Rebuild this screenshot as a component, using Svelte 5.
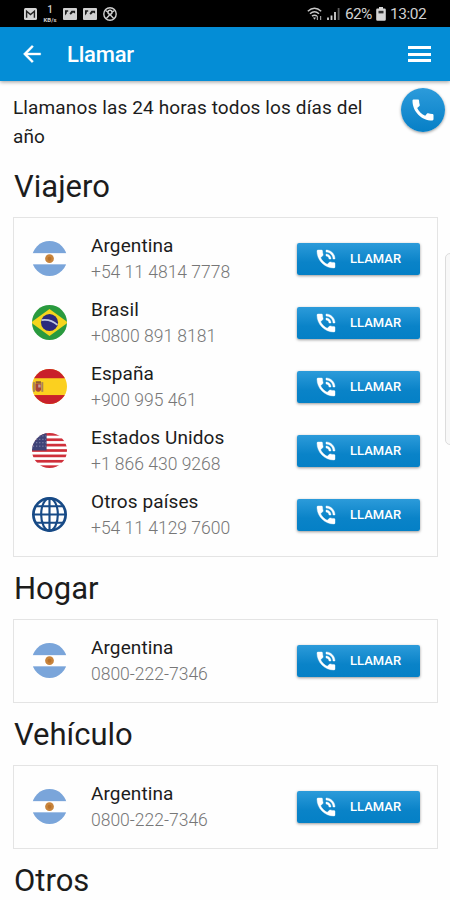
<script lang="ts">
	type Flag = 'ar' | 'br' | 'es' | 'us' | 'world';

	interface Contact {
		country: string;
		phone: string;
		flag: Flag;
	}

	interface Section {
		title: string;
		contacts: Contact[];
	}

	const sections: Section[] = [
		{
			title: 'Viajero',
			contacts: [
				{ country: 'Argentina', phone: '+54 11 4814 7778', flag: 'ar' },
				{ country: 'Brasil', phone: '+0800 891 8181', flag: 'br' },
				{ country: 'España', phone: '+900 995 461', flag: 'es' },
				{ country: 'Estados Unidos', phone: '+1 866 430 9268', flag: 'us' },
				{ country: 'Otros países', phone: '+54 11 4129 7600', flag: 'world' }
			]
		},
		{
			title: 'Hogar',
			contacts: [{ country: 'Argentina', phone: '0800-222-7346', flag: 'ar' }]
		},
		{
			title: 'Vehículo',
			contacts: [{ country: 'Argentina', phone: '0800-222-7346', flag: 'ar' }]
		},
		{ title: 'Otros', contacts: [] }
	];

	const stripes = [0, 2, 4, 6, 8, 10, 12];
</script>

{#snippet picture()}
	<svg width="14" height="12" viewBox="0 0 14 12">
		<rect width="14" height="12" rx="1" fill="#d0d0d0" />
		<path d="M2 7.500V2.200h3.200v1.600H3.800v1.400L2 7.500zM6.500 5.400l2-2.600h3.600v2.800L10 4.600 7.800 6.800z" fill="#1c1c1c" />
	</svg>
{/snippet}

{#snippet flagIcon(flag: Flag)}
	<svg class="flag" viewBox="0 0 36 36">
		<defs>
			<clipPath id="round"><circle cx="18" cy="18" r="18" /></clipPath>
		</defs>
		{#if flag === 'ar'}
			<g clip-path="url(#round)">
				<rect width="36" height="36" fill="#fff" />
				<rect width="36" height="12.5" fill="#7aa5da" />
				<rect y="24" width="36" height="12" fill="#7aa5da" />
				<circle cx="18" cy="18.2" r="4.5" fill="#c8843c" />
				<circle cx="18" cy="18.2" r="2" fill="#b9722b" />
			</g>
		{:else if flag === 'br'}
			<g clip-path="url(#round)">
				<rect width="36" height="36" fill="#299a3e" />
				<path d="M18 4l19 14-19 14L-1 18z" fill="#f5d51e" />
				<circle cx="18" cy="18" r="8.8" fill="#2c2a7c" />
				<path d="M9.8 15.5c6-1 12 1 16.3 5" fill="none" stroke="#c3c8e2" stroke-width="1.8" />
			</g>
		{:else if flag === 'es'}
			<g clip-path="url(#round)">
				<rect width="36" height="36" fill="#fbd01f" />
				<rect width="36" height="9.5" fill="#c9202b" />
				<rect y="26.8" width="36" height="9.2" fill="#c9202b" />
				<rect x="1" y="13.5" width="2" height="10" fill="#a98355" />
				<rect x="9.6" y="13.5" width="2" height="10" fill="#a98355" />
				<path d="M3.5 15h5.8v6.5q-2.9 4-5.8 0z" fill="#a8443a" />
				<path d="M3.8 12.6h5.4v2.2H3.8z" fill="#8c5a35" />
				<path d="M6.4 16h2.5v3H6.4z" fill="#c0a0a0" />
			</g>
		{:else if flag === 'us'}
			<g clip-path="url(#round)">
				<rect width="36" height="36" fill="#fff" />
				{#each stripes as i}
					<rect y={i * 2.77} width="36" height="2.77" fill="#cf2f3a" />
				{/each}
				<rect width="15" height="18" fill="#3f4377" />
				{#each [3, 6.5, 10, 13.5] as y}
					<path d="M1 {y}h13.5" stroke="#9094b5" stroke-width="1" stroke-dasharray="1.2 2" />
				{/each}
			</g>
		{:else}
			<g fill="none" stroke="#174a86" stroke-width="2.2">
				<circle cx="18" cy="18" r="16.6" stroke-width="2.8" />
				<ellipse cx="18" cy="18" rx="8.6" ry="16.6" />
				<path d="M18 1v34M1 18h34M4 9.500h28M4 26.500h28" />
			</g>
		{/if}
	</svg>
{/snippet}

<div class="screen">
	<div class="status-bar">
		<div class="notifications">
			<svg width="13" height="12" viewBox="0 0 13 12">
				<rect width="13" height="12" rx="1.5" fill="#d6d6d6" />
				<path d="M2.6 9.8V3.2l3.9 3.3 3.9-3.3v6.6" fill="none" stroke="#222" stroke-width="1.4" />
			</svg>
			<div class="speed">
				<span class="speed-value">1</span>
				<span class="speed-unit">KB/s</span>
			</div>
			{@render picture()}
			{@render picture()}
			<svg width="14" height="14" viewBox="0 0 14 14">
				<g fill="none" stroke="#d0d0d0" stroke-width="1.4">
					<circle cx="7" cy="7" r="6.2" />
					<circle cx="7" cy="5.3" r="2" />
					<path d="M3.3 11.5l3.7-4 3.7 4M2.5 3.5l2.5 1.6M11.5 3.5L9 5.1" />
				</g>
			</svg>
		</div>
		<div class="system">
			<svg width="16" height="14" viewBox="0 0 16 14">
				<g fill="none" stroke="#c8c8c8" stroke-width="1.5">
					<path d="M.8 4.2q6.7-6 13.400 0M3 6.800q4.500-4 9 0" />
					<path d="M5 9.200q2.500-2 5 0" />
				</g>
				<path d="M6 10.400h3l-1.500 2.400z" fill="#c8c8c8" />
				<path d="M10.400 9v4M13.600 9v4" stroke="#999" stroke-width="1.2" />
			</svg>
			<svg class="signal" width="13" height="13" viewBox="0 0 13 13">
				<path d="M1 13v-2.500M4.500 13V8.500M8 13V5" stroke="#d0d0d0" stroke-width="1.8" />
				<path d="M11.600 13V1" stroke="#5c5c5c" stroke-width="1.8" />
			</svg>
			<span class="percent">62%</span>
			<svg class="battery" width="10" height="14" viewBox="0 0 10 14">
				<path d="M3 0h4v1.500h1.600q1.200 0 1.200 1.200v9.800q0 1.300-1.200 1.300H1.400Q.2 13.800.2 12.500V2.700Q.2 1.500 1.400 1.500H3z" fill="#d6d6d6" />
				<path d="M2.500 3.800h5v2.600h-5z" fill="#333" />
			</svg>
			<span class="time">13:02</span>
		</div>
	</div>

	<header class="app-bar">
		<button class="icon-btn" aria-label="Volver">
			<svg width="26" height="26" viewBox="0 0 24 24">
				<path d="M20 11H7.830l5.590-5.590L12 4l-8 8 8 8 1.410-1.410L7.830 13H20v-2z" fill="#fff" stroke="#fff" stroke-width=".3" />
			</svg>
		</button>
		<h1>Llamar</h1>
		<button class="icon-btn menu" aria-label="Menú">
			<span></span>
			<span></span>
			<span></span>
		</button>
	</header>

	<main>
		<div class="intro">
			<p>Llamanos las 24 horas todos los días del año</p>
			<button class="fab" aria-label="Llamar">
				<svg width="28" height="28" viewBox="0 0 24 24">
					<path d="M20.010 15.380c-1.230 0-2.420-.2-3.530-.560-.350-.120-.740-.030-1.010.240l-1.570 1.970c-2.830-1.350-5.480-3.900-6.890-6.830l1.950-1.660c.270-.280.350-.670.240-1.020-.370-1.110-.560-2.300-.560-3.530 0-.540-.450-.990-.990-.990H4.190C3.650 3 3 3.240 3 3.990 3 13.280 10.730 21 20.010 21c.710 0 .990-.630.990-1.180v-3.450c0-.540-.450-.990-.990-.990z" fill="#fff" />
				</svg>
			</button>
		</div>

		{#each sections as section (section.title)}
			<h2>{section.title}</h2>
			{#if section.contacts.length}
				<div class="card">
					{#each section.contacts as contact (contact.phone)}
						<div class="contact">
							{@render flagIcon(contact.flag)}
							<div class="info">
								<span class="country">{contact.country}</span>
								<span class="phone">{contact.phone}</span>
							</div>
							<button class="call-btn">
								<svg width="24" height="24" viewBox="0 0 24 24">
									<path d="M20 15.500c-1.250 0-2.450-.2-3.570-.570-.350-.110-.740-.030-1.020.240l-2.200 2.200c-2.830-1.440-5.150-3.750-6.590-6.590l2.200-2.210c.280-.260.360-.650.250-1C8.700 6.450 8.500 5.250 8.500 4c0-.550-.450-1-1-1H4c-.550 0-1 .450-1 1 0 9.390 7.610 17 17 17 .550 0 1-.450 1-1v-3.500c0-.550-.450-1-1-1zM19 12h2c0-4.970-4.030-9-9-9v2c3.870 0 7 3.130 7 7zm-4 0h2c0-2.760-2.240-5-5-5v2c1.660 0 3 1.340 3 3z" fill="#fff" stroke="#fff" stroke-width=".4" />
								</svg>
								<span>LLAMAR</span>
							</button>
						</div>
					{/each}
				</div>
			{/if}
		{/each}
	</main>

	<div class="edge-handle"></div>
</div>

<style>
	:global(body) {
		margin: 0;
		background: #fefefe;
	}
	.screen {
		position: relative;
		width: 450px;
		height: 900px;
		overflow: hidden;
		background: #fefefe;
		color: #1c1c1c;
		font-family: Roboto, 'Liberation Sans', sans-serif;
	}
	button {
		padding: 0;
		border: none;
		background: none;
		font-family: inherit;
	}
	svg {
		display: block;
		flex-shrink: 0;
	}
	.status-bar {
		display: flex;
		justify-content: space-between;
		height: 27px;
		padding: 0 24px;
		background: #000;
		color: #d0d0d0;
	}
	.notifications,
	.system {
		display: flex;
		align-items: center;
	}
	.notifications {
		gap: 6px;
	}
	.speed {
		display: flex;
		flex-direction: column;
		align-items: center;
		width: 14px;
	}
	.speed-value {
		font-size: 10px;
		font-weight: 500;
		line-height: 12px;
	}
	.speed-unit {
		font-size: 6px;
		font-weight: 700;
		line-height: 7px;
	}
	.signal {
		margin: 0 5px 0 4px;
	}
	.percent,
	.time {
		font-size: 15.5px;
		line-height: 27px;
		padding-top: 1px;
	}
	.percent {
		width: 26px;
		letter-spacing: -0.7px;
	}
	.battery {
		margin: 0 4px 0 5px;
	}
	.time {
		width: 36px;
		letter-spacing: -0.5px;
	}
	.app-bar {
		position: relative;
		display: flex;
		align-items: center;
		height: 54px;
		padding: 0 19px;
		background: #048dd6;
		box-shadow: 0 1px 4px rgba(0, 0, 0, 0.4);
	}
	h1 {
		flex: 1;
		margin: 1px 0 0 22px;
		color: #fff;
		font-size: 22px;
		font-weight: 500;
		letter-spacing: -0.2px;
	}
	.menu {
		display: flex;
		flex-direction: column;
		gap: 3.5px;
		width: 23px;
	}
	.menu span {
		height: 3px;
		background: #fff;
	}
	main {
		padding: 12px 12px 0 13px;
	}
	.intro {
		display: flex;
		justify-content: space-between;
		height: 62px;
	}
	p {
		width: 365px;
		margin: 1px 0 0;
		font-size: 19px;
		line-height: 28.5px;
		letter-spacing: 0.13px;
	}
	.fab {
		display: flex;
		align-items: center;
		justify-content: center;
		flex-shrink: 0;
		width: 44px;
		height: 44px;
		margin: -5px -7px 0 0;
		border-radius: 50%;
		background: linear-gradient(#2c9bdb, #067fc6);
		box-shadow: 0 1px 3px rgba(0, 0, 0, 0.4);
	}
	h2 {
		height: 61px;
		margin: 0;
		padding: 1px 0 0 1px;
		font-size: 31px;
		font-weight: 400;
		line-height: 61px;
	}
	.card {
		padding: 9px 17px 9px 18px;
		border: 1px solid #e4e4e4;
	}
	.contact {
		display: flex;
		align-items: center;
		height: 64px;
	}
	.flag {
		width: 35px;
		height: 35px;
		margin-top: -1px;
	}
	.info {
		display: flex;
		flex: 1;
		flex-direction: column;
		margin-left: 24px;
	}
	.country {
		font-size: 19px;
		line-height: 26px;
		letter-spacing: 0.1px;
	}
	.phone {
		color: #777;
		font-size: 17.5px;
		font-weight: 300;
		line-height: 27px;
	}
	.call-btn {
		display: flex;
		align-items: center;
		width: 123px;
		height: 32px;
		margin-top: -1px;
		padding-left: 17px;
		border-radius: 2px;
		background: linear-gradient(#2c9bda, #0a83c8 60%, #0480c6);
		box-shadow: 0 1px 3px rgba(0, 0, 0, 0.4);
		color: #fff;
		font-size: 13px;
		font-weight: 500;
	}
	.call-btn span {
		margin-left: 12px;
	}
	.edge-handle {
		position: absolute;
		top: 253px;
		right: -6px;
		width: 9px;
		height: 190px;
		border: 1px solid #dcdcdc;
		border-radius: 5px;
		background: #f8f8f8;
	}
</style>
